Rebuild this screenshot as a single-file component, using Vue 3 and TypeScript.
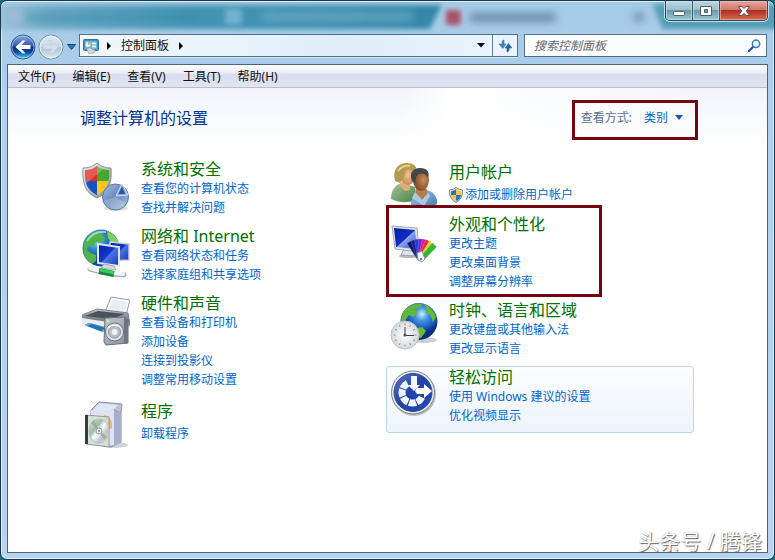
<script setup lang="ts">
import { ref } from 'vue'

interface Category {
  id: string
  title: string
  links: string[]
  shield?: boolean
  marked?: boolean
  active?: boolean
}

const menus: string[] = ['文件(F)', '编辑(E)', '查看(V)', '工具(T)', '帮助(H)']
const query = ref('')
const view = ref('类别')

const columns: Category[][] = [
  [
    { id: 'security', title: '系统和安全', links: ['查看您的计算机状态', '查找并解决问题'] },
    { id: 'network', title: '网络和 Internet', links: ['查看网络状态和任务', '选择家庭组和共享选项'] },
    { id: 'hardware', title: '硬件和声音', links: ['查看设备和打印机', '添加设备', '连接到投影仪', '调整常用移动设置'] },
    { id: 'programs', title: '程序', links: ['卸载程序'] },
  ],
  [
    { id: 'users', title: '用户帐户', links: ['添加或删除用户帐户'], shield: true },
    { id: 'appearance', title: '外观和个性化', links: ['更改主题', '更改桌面背景', '调整屏幕分辨率'], marked: true },
    { id: 'clock', title: '时钟、语言和区域', links: ['更改键盘或其他输入法', '更改显示语言'] },
    { id: 'access', title: '轻松访问', links: ['使用 Windows 建议的设置', '优化视频显示'], active: true },
  ],
]

const fan = [
  { angle: -30, color: '#10106e' },
  { angle: -18, color: '#141f8e' },
  { angle: -7, color: '#1740d8' },
  { angle: 4, color: '#7a22c8' },
  { angle: 14, color: '#d51ba8' },
  { angle: 24, color: '#ee2430' },
  { angle: 34, color: '#e8d42a' },
  { angle: 44, color: '#35b535' },
]
const ticks = Array.from({ length: 12 }, (_, i) => i * 30)
</script>

<template>
  <div class="window">
    <svg class="glass" viewBox="0 0 775 64" preserveAspectRatio="none" aria-hidden="true">
      <defs>
        <linearGradient id="teal" x1="0" x2="1">
          <stop offset="0" stop-color="#9fc6da" />
          <stop offset=".12" stop-color="#6fabc5" />
          <stop offset=".42" stop-color="#4596b5" />
          <stop offset="1" stop-color="#3487a6" />
        </linearGradient>
        <filter id="soft" x="-10%" y="-40%" width="120%" height="180%"><feGaussianBlur stdDeviation="2.5" /></filter>
        <filter id="softer" x="-10%" y="-100%" width="120%" height="300%"><feGaussianBlur stdDeviation="4" /></filter>
      </defs>
      <g filter="url(#soft)">
        <path d="M-8 3H442L430 27H-8Z" fill="url(#teal)" />
        <path d="M653 2H790V27H663Z" fill="#559fb6" />
        <rect x="225" y="7" width="16" height="15" fill="#73b3d0" />
        <rect x="446" y="8" width="15" height="15" rx="2" fill="#a75369" />
        <rect x="9" y="8" width="11" height="14" fill="#9fb9d6" />
      </g>
      <g filter="url(#softer)">
        <rect x="26" y="12" width="175" height="7" fill="#3987aa" opacity=".6" />
        <rect x="262" y="10" width="150" height="9" fill="#79b5cf" opacity=".6" />
        <rect x="470" y="11" width="86" height="9" fill="#52718d" opacity=".7" />
        <rect x="635" y="11" width="9" height="8" fill="#66829c" />
      </g>
    </svg>

    <header class="titlebar">
      <div class="controls">
        <button type="button" class="control" aria-label="最小化">
          <svg width="14" height="12" viewBox="0 0 14 12"><rect x="1.5" y="6.5" width="11" height="4" rx="1" fill="#fff" stroke="#535f6e" /></svg>
        </button>
        <button type="button" class="control" aria-label="最大化">
          <svg width="14" height="12" viewBox="0 0 14 12"><path d="M1.500 1.500H12.500V10.500H1.500ZM5.500 4.500V7.500H8.500V4.500Z" fill="#fff" fill-rule="evenodd" stroke="#535f6e" /></svg>
        </button>
        <button type="button" class="control close" aria-label="关闭">
          <svg width="14" height="12" viewBox="0 0 14 12"><path d="M1.500 1.500H5L7 3.600L9 1.500H12.500L9.300 6L12.500 10.500H9L7 8.400L5 10.500H1.500L4.700 6Z" fill="#fff" stroke="#6b4a50" /></svg>
        </button>
      </div>
    </header>

    <nav class="navigation" aria-label="导航">
      <div class="travel">
        <button type="button" class="plain" aria-label="后退">
          <svg width="26" height="26" viewBox="0 0 26 26">
            <defs>
              <linearGradient id="back" x2="0" y2="1">
                <stop offset="0" stop-color="#8ba8e0" /><stop offset=".46" stop-color="#3159b2" />
                <stop offset=".5" stop-color="#0b2a84" /><stop offset=".72" stop-color="#0e4ba6" /><stop offset="1" stop-color="#4ee4fa" />
              </linearGradient>
            </defs>
            <circle cx="13" cy="13" r="12" fill="url(#back)" stroke="#3c5784" />
            <circle cx="13" cy="13" r="11" fill="none" stroke="#c3d9f3" stroke-opacity=".6" />
            <path d="M5.500 13L12.500 6.500H15.500L11.500 11H20.500V15H11.500L15.500 19.500H12.500Z" fill="#fff" />
          </svg>
        </button>
        <button type="button" class="plain" aria-label="前进">
          <svg width="26" height="26" viewBox="0 0 26 26">
            <defs>
              <linearGradient id="forward" x2="0" y2="1">
                <stop offset="0" stop-color="#e0ebf5" /><stop offset=".48" stop-color="#c8d9e7" />
                <stop offset=".52" stop-color="#adc3d6" /><stop offset="1" stop-color="#dceaf4" />
              </linearGradient>
            </defs>
            <circle cx="13" cy="13" r="12" fill="url(#forward)" stroke="#718ba4" />
            <circle cx="13" cy="13" r="11" fill="none" stroke="#eef5fb" />
            <path d="M20.500 13L13.500 6.500H10.500L14.500 11H5.500V15H14.500L10.500 19.500H13.500Z" fill="#d3e0eb" stroke="#c0d0de" stroke-width=".7" />
          </svg>
        </button>
        <button type="button" class="plain recent" aria-label="最近的页面">
          <svg width="9" height="6" viewBox="0 0 9 6"><path d="M.5 .5H8.500L4.500 5.500Z" fill="#2d78b8" stroke="#17456d" /></svg>
        </button>
      </div>

      <div class="address">
        <svg class="panel-icon" width="16" height="16" viewBox="0 0 16 16" aria-hidden="true">
          <rect x=".5" y="1.500" width="15" height="11" rx="1" fill="#3f8fd0" stroke="#36709f" />
          <rect x="2" y="3" width="12" height="8" fill="#69b7e8" />
          <circle cx="5" cy="6.500" r="2.500" fill="#e8f5e0" /><path d="M5 6.500V4A2.500 2.500 0 0 1 7.500 6.500Z" fill="#e5a630" />
          <path d="M9 5.500H13M9 8.500H13" stroke="#fff" stroke-width="1.500" />
          <path d="M4 12C4 10 7 9 9 11L12 12V14L9 16H6Z" fill="#d8d2c8" stroke="#8d8c8e" stroke-width=".5" />
        </svg>
        <svg class="chevron" width="4" height="8" viewBox="0 0 4 8" aria-hidden="true"><path d="M0 0L4 4L0 8Z" fill="#000" /></svg>
        <button type="button" class="crumb">控制面板</button>
        <svg class="chevron" width="4" height="8" viewBox="0 0 4 8" aria-hidden="true"><path d="M0 0L4 4L0 8Z" fill="#000" /></svg>
        <button type="button" class="plain history" aria-label="以前的位置">
          <svg width="8" height="5" viewBox="0 0 8 5"><path d="M0 0H8L4 4.500Z" fill="#050531" /></svg>
        </button>
        <button type="button" class="plain refresh" aria-label="刷新">
          <svg width="15" height="14" viewBox="0 0 15 14">
            <path d="M6 1C4.500 1 4 2.500 4 4.500V5H1L4.800 9.500L8 5H6Z" fill="#3f8bc4" stroke="#29679e" stroke-width=".5" />
            <path d="M9 13C10.500 13 11.200 11.500 11.200 9.500V9H14L10.500 4.500L7 9H9Z" fill="#2668a5" stroke="#1c4f85" stroke-width=".5" />
          </svg>
        </button>
      </div>

      <form class="search" role="search" @submit.prevent>
        <input v-model="query" type="text" aria-label="搜索控制面板" placeholder="搜索控制面板" />
        <button type="submit" class="plain" aria-label="搜索">
          <svg width="13" height="13" viewBox="0 0 13 13"><path d="M1 12L5.500 7.500" stroke="#284f96" stroke-width="2.200" stroke-linecap="round" /><circle cx="8" cy="4.800" r="3.700" fill="#eff8ff" stroke="#347dc3" stroke-width="1.500" /></svg>
        </button>
      </form>
    </nav>

    <div class="client">
      <div class="menubar">
        <button v-for="menu in menus" :key="menu" type="button">{{ menu }}</button>
      </div>

      <main>
        <div class="heading">
          <h1>调整计算机的设置</h1>
          <div class="view-mode">
            <label for="view">查看方式:</label>
            <span class="picker">
              <select id="view" v-model="view">
                <option>类别</option>
                <option>大图标</option>
                <option>小图标</option>
              </select>
            </span>
          </div>
        </div>

        <div class="categories">
          <div v-for="(column, index) in columns" :key="index" class="column">
            <section
              v-for="item in column"
              :key="item.id"
              class="category"
              :class="{ single: item.links.length === 1, marked: item.marked, active: item.active }"
            >
              <svg v-if="item.id === 'security'" class="icon" viewBox="0 0 48 50" aria-hidden="true">
                <defs>
                  <linearGradient id="rim" x2="1" y2="1"><stop offset="0" stop-color="#f6f6f6" /><stop offset="1" stop-color="#858b8f" /></linearGradient>
                  <clipPath id="shieldClip"><path d="M15 4C11 7 7 8 3 8C2 20 5 28 15 33C25 28 28 20 27 8C23 8 19 7 15 4Z" /></clipPath>
                  <linearGradient id="pie" x2="1" y2="1"><stop offset="0" stop-color="#a9c0df" /><stop offset=".5" stop-color="#6487bc" /><stop offset="1" stop-color="#b5cbe4" /></linearGradient>
                </defs>
                <path d="M15 1C10 5 6 6 1 6C0 21 3 31 15 36C27 31 30 21 29 6C24 6 20 5 15 1Z" fill="url(#rim)" stroke="#888d90" />
                <g clip-path="url(#shieldClip)">
                  <path d="M0 0H15V19H0Z" fill="#d92c23" /><path d="M15 0H31V19H15Z" fill="#46a82b" />
                  <path d="M0 19H15V36H0Z" fill="#1453c2" /><path d="M15 19H31V36H15Z" fill="#ffc51b" />
                  <path d="M0 0H30L0 25Z" fill="#fff" opacity=".22" />
                </g>
                <ellipse cx="34" cy="46" rx="12" ry="3" fill="#7d8999" opacity=".3" />
                <circle cx="33.500" cy="35" r="13" fill="url(#pie)" stroke="#5d7aa5" />
                <path d="M22 39A12 12 0 0 0 44 41L33 35Z" fill="#d4e2f1" opacity=".35" />
                <path d="M34 34L40 22L46 33Z" fill="#7f9fd2" stroke="#d7e4f4" />
                <path d="M36.500 32L40 24.500L43 32Z" fill="#2855aa" />
              </svg>

              <svg v-else-if="item.id === 'network'" class="icon" viewBox="0 0 48 50" aria-hidden="true">
                <defs>
                  <radialGradient id="earth" cx=".35" cy=".28"><stop offset="0" stop-color="#b2ecfb" /><stop offset=".45" stop-color="#3393d2" /><stop offset="1" stop-color="#154b9e" /></radialGradient>
                  <linearGradient id="screen" x2="1" y2="1"><stop offset="0" stop-color="#071ea0" /><stop offset=".48" stop-color="#1238ce" /><stop offset=".52" stop-color="#4b75e7" /><stop offset="1" stop-color="#1933b4" /></linearGradient>
                </defs>
                <circle cx="19" cy="19" r="18.500" fill="url(#earth)" />
                <path d="M3 12C8 3 15 2 21 3L20 7L24 9L19 14L14 13L12 17L7 17L5 21L9 24L14 26L14 32L10 35C2 30-1 20 3 12Z" fill="#50b34b" />
                <path d="M25 2C32 5 36 10 37 15L29 13L26 9Z" fill="#83cf5d" />
                <path d="M5 12Q12 1 24 3" fill="none" stroke="#e9ffff" stroke-width="2" opacity=".55" />
                <path d="M28 13L47 15V31L28 32Z" fill="url(#screen)" stroke="#cbd3db" stroke-width="1.500" />
                <path d="M16 15L37 18V37L16 34Z" fill="url(#screen)" stroke="#e0e6ea" stroke-width="2" />
                <path d="M22 35L32 37L34 41L19 39Z" fill="#d3dae0" stroke="#8c9aa5" stroke-width=".7" />
                <path d="M8 40L19 43M31 45L42 46" stroke="#a7b0b5" stroke-width="5" stroke-linecap="round" />
                <path d="M8 39L18 42M31 44L41 45" stroke="#f1f5f6" stroke-width="4" stroke-linecap="round" />
                <path d="M17 42L32 45" stroke="#16843a" stroke-width="6" /><path d="M18 41L32 44" stroke="#36cf59" stroke-width="3" />
              </svg>

              <svg v-else-if="item.id === 'hardware'" class="icon" viewBox="0 0 48 50" aria-hidden="true">
                <defs>
                  <linearGradient id="printer" x2="0" y2="1"><stop offset="0" stop-color="#bec7cd" /><stop offset=".45" stop-color="#707a82" /><stop offset="1" stop-color="#e6e9eb" /></linearGradient>
                  <linearGradient id="speaker" x2="1" y2="1"><stop offset="0" stop-color="#c3cbd0" /><stop offset="1" stop-color="#858f96" /></linearGradient>
                </defs>
                <path d="M29 1L48 4L43 23L22 19Z" fill="#f8fafc" stroke="#929ba3" />
                <path d="M31 3L45 6L42 18L26 15Z" fill="#e8eef3" />
                <path d="M0 19L15 13L46 17L48 29L31 37L0 29Z" fill="url(#printer)" stroke="#798188" />
                <path d="M3 20L16 15L43 18L29 23Z" fill="#4a535a" />
                <path d="M0 22L26 26V35L0 30Z" fill="#e9ecef" />
                <path d="M1 29L7 26L26 31L21 37Z" fill="#58a9dd" stroke="#fff" />
                <path d="M5 30L10 28L23 32L19 35Z" fill="#286eae" />
                <path d="M23 22L42 21L46 24V47L24 49L22 46Z" fill="url(#speaker)" stroke="#657078" />
                <path d="M42 21L46 24V47L42 48Z" fill="#6b767d" />
                <circle cx="32.500" cy="36" r="9" fill="#dde2e4" stroke="#68747c" />
                <circle cx="32.500" cy="36" r="6" fill="#b7bfc4" stroke="#8e989e" />
                <circle cx="32.500" cy="36" r="3" fill="#eff2f3" />
                <path d="M26 32Q30 28 36 30" fill="none" stroke="#fff" stroke-width="1.500" />
                <circle cx="26" cy="25" r="1" fill="#dfe4e6" />
              </svg>

              <svg v-else-if="item.id === 'programs'" class="icon" viewBox="0 0 48 50" aria-hidden="true">
                <defs>
                  <linearGradient id="box" x2="1" y2="1"><stop offset="0" stop-color="#edf0fb" /><stop offset="1" stop-color="#b0b8d2" /></linearGradient>
                  <linearGradient id="disc" x2="1" y2="1"><stop offset="0" stop-color="#d8e6df" /><stop offset=".35" stop-color="#9ebba7" /><stop offset=".5" stop-color="#fff" /><stop offset=".7" stop-color="#bdc3cb" /><stop offset="1" stop-color="#dfe9c5" /></linearGradient>
                </defs>
                <ellipse cx="33" cy="44" rx="13" ry="3" fill="#697080" opacity=".3" />
                <path d="M9 9H32L39 12V41L29 46L9 43Z" fill="url(#box)" stroke="#858dac" />
                <path d="M17 1L40 3L39 12L32 9H9Z" fill="#bac1d8" stroke="#8991af" />
                <path d="M17 2L36 4L31 9H11Z" fill="#e3e7f3" />
                <path d="M9 9H32V44L9 43Z" fill="#dfe3f1" />
                <path d="M32 9L39 12V41L32 45Z" fill="#a6aec9" />
                <path d="M22 14Q31 16 30 27L22 31Z" fill="#efb068" />
                <path d="M4 14L27 16V46L4 43Z" fill="#d6ded6" fill-opacity=".9" stroke="#929e98" />
                <path d="M3 14H6V43H3Z" fill="#343b3b" />
                <ellipse cx="17" cy="30" rx="10" ry="12" fill="url(#disc)" stroke="#b6bfbb" />
                <path d="M17 30L9 22L12 19ZM17 30L25 35L22 39Z" fill="#819f88" opacity=".6" />
                <circle cx="17" cy="30" r="3" fill="#edf1ed" stroke="#939c98" /><circle cx="17" cy="30" r="1" fill="#7d8984" />
              </svg>

              <svg v-else-if="item.id === 'users'" class="icon" viewBox="0 0 48 50" aria-hidden="true">
                <defs>
                  <linearGradient id="green" x2="1" y2="1"><stop offset="0" stop-color="#a6c49a" /><stop offset="1" stop-color="#4d824b" /></linearGradient>
                  <linearGradient id="blue" x2="1" y2="1"><stop offset="0" stop-color="#9fc6e6" /><stop offset="1" stop-color="#477cac" /></linearGradient>
                  <radialGradient id="face"><stop offset="0" stop-color="#edc494" /><stop offset="1" stop-color="#ca8c55" /></radialGradient>
                  <radialGradient id="face2" cx=".65"><stop offset="0" stop-color="#c98e5c" /><stop offset="1" stop-color="#85502f" /></radialGradient>
                </defs>
                <path d="M1 37C1 27 6 22 13 21L25 25L25 39Q10 42 1 37Z" fill="url(#green)" />
                <path d="M11 20L20 21L20 28L15 29L9 23Z" fill="#dfad77" />
                <ellipse cx="18" cy="13" rx="8" ry="10" fill="url(#face)" />
                <path d="M5 19C2 8 8 1 17 1C24 1 28 5 26 10C22 8 20 6 16 8L14 16L10 21Z" fill="#b59a51" />
                <path d="M8 9Q12 3 20 4" stroke="#e2d28d" stroke-width="2" fill="none" />
                <path d="M21 44C21 33 27 29 34 28C43 28 48 35 47 42Q36 48 21 44Z" fill="url(#blue)" />
                <path d="M26 25L37 27L38 34L33 38L25 31Z" fill="#ba7b4b" />
                <path d="M25 30L32 38L38 31L40 34L34 44L22 36Z" fill="#a8cbe6" />
                <ellipse cx="31" cy="18" rx="8" ry="11" fill="url(#face2)" />
                <path d="M22 19C19 11 23 6 30 6C37 6 40 10 38 15C35 11 32 11 28 12L26 15L25 21Z" fill="#41474b" />
              </svg>

              <svg v-else-if="item.id === 'appearance'" class="icon" viewBox="0 0 48 50" aria-hidden="true">
                <defs>
                  <linearGradient id="monitor" x2="1" y2="1"><stop offset="0" stop-color="#061f9a" /><stop offset=".5" stop-color="#0e2fc8" /><stop offset=".52" stop-color="#8ea5f5" /><stop offset="1" stop-color="#2142c7" /></linearGradient>
                </defs>
                <ellipse cx="19" cy="39" rx="10" ry="2" fill="#b1babd" />
                <path d="M14 32L24 34L24 39L11 38Z" fill="#e2e6e8" stroke="#95a0a7" />
                <path d="M2 9L27 11L29 35L5 32Z" fill="#dce3e8" stroke="#a0abb2" />
                <path d="M4 11L25 13L27 32L6 30Z" fill="url(#monitor)" />
                <g transform="translate(30 43)">
                  <path
                    v-for="blade in fan"
                    :key="blade.angle"
                    d="M-2 0L-3 -21L3 -21L3 0Z"
                    :fill="blade.color"
                    stroke="#fff"
                    stroke-opacity=".35"
                    stroke-width=".5"
                    :transform="`rotate(${blade.angle})`"
                  />
                </g>
                <path d="M27 36L32 34L35 42L32 45L28 43Z" fill="#f2f3f7" stroke="#8d90a0" /><circle cx="31" cy="42" r="1" fill="#535866" />
              </svg>

              <svg v-else-if="item.id === 'clock'" class="icon" viewBox="0 0 48 50" aria-hidden="true">
                <defs>
                  <radialGradient id="globe" cx=".58" cy=".3"><stop offset="0" stop-color="#c0f1ff" /><stop offset=".36" stop-color="#4593df" /><stop offset=".75" stop-color="#195bc0" /><stop offset="1" stop-color="#092f80" /></radialGradient>
                  <radialGradient id="dial"><stop offset="0" stop-color="#fff" /><stop offset="1" stop-color="#d2d9de" /></radialGradient>
                </defs>
                <ellipse cx="32" cy="37" rx="15" ry="3" fill="#7b8794" opacity=".4" />
                <circle cx="29" cy="18.500" r="18.500" fill="url(#globe)" />
                <path d="M13 9C18 2 26 0 32 1L31 4L25 6L28 10L23 14L19 12L15 18L11 19Q11 13 13 9Z" fill="#5fb83c" />
                <path d="M34 1Q43 5 46 14L43 19L40 11L35 10L37 6Z" fill="#67bb34" />
                <path d="M26 25L32 24L36 28L31 35L27 35L28 30Z" fill="#69bd34" />
                <circle cx="15" cy="32" r="14" fill="url(#dial)" stroke="#b9c2c8" />
                <path v-for="angle in ticks" :key="angle" d="M15 20.500V22.500" stroke="#8e979d" :transform="`rotate(${angle} 15 32)`" />
                <path d="M15 24V32.500H24" fill="none" stroke="#3c4349" /><circle cx="15" cy="32" r="1.500" fill="#464d52" />
              </svg>

              <svg v-else class="icon" viewBox="0 0 48 50" aria-hidden="true">
                <defs>
                  <linearGradient id="access" x2="1" y2="1"><stop offset="0" stop-color="#6078cc" /><stop offset=".45" stop-color="#2342a9" /><stop offset="1" stop-color="#2149b6" /></linearGradient>
                </defs>
                <circle cx="24" cy="24" r="22" fill="#7d8790" opacity=".5" />
                <circle cx="23" cy="22.500" r="21.500" fill="#e7ecf0" stroke="#79838c" />
                <circle cx="23" cy="22.500" r="19" fill="url(#access)" stroke="#3a4b7d" />
                <path d="M17.500 13.300A10.500 10.500 0 1 0 32 27" fill="none" stroke="#f1f4fc" stroke-width="7" stroke-dasharray="7 1" />
                <path d="M21 6H27V15H30L24 21L18 15H21Z" fill="#f4f6fc" />
                <path d="M27 18H34V14L42 21L34 28V24H27L25 21Z" fill="#fff" />
              </svg>

              <div>
                <h2><a href="#">{{ item.title }}</a></h2>
                <ul>
                  <li v-for="link in item.links" :key="link">
                    <svg v-if="item.shield" class="shield" width="14" height="16" viewBox="0 0 14 16" aria-hidden="true">
                      <path d="M7 .5Q4 3 .5 3Q0 12 7 15.500Q14 12 13.500 3Q10 3 7 .5Z" fill="#e8eaeb" stroke="#7b8288" />
                      <path d="M7 2Q5 4 2 4.200V8H7Z" fill="#2874c9" /><path d="M7 2Q9 4 12 4.200V8H7Z" fill="#fac832" />
                      <path d="M2 8H7V14Q2 12 2 8Z" fill="#fac832" /><path d="M12 8H7V14Q12 12 12 8Z" fill="#2874c9" />
                    </svg>
                    <a href="#">{{ link }}</a>
                  </li>
                </ul>
              </div>
            </section>
          </div>
        </div>
      </main>
    </div>
    <div class="watermark">头条号 / 腾锋</div>
  </div>
</template>

<style>
body {
  background: #176d7b;
}
</style>

<style scoped>
*,
*::after {
  box-sizing: border-box;
}

.window {
  position: relative;
  display: flex;
  flex-direction: column;
  min-height: 100vh;
  padding: 0 6px 6px;
  overflow: hidden;
  border: 1px solid #18384e;
  border-radius: 7px;
  background: linear-gradient(#a6cae6, #b0d0ef 120px, #b9d4f0);
  box-shadow: inset 0 0 0 1px #dceefb;
  color: #111;
  font: 12px/19px "Noto Sans", "Noto Sans CJK SC", sans-serif;
}

button,
input,
select {
  margin: 0;
  padding: 0;
  border: 0;
  background: none;
  color: inherit;
  font: inherit;
}

svg {
  display: block;
  flex: none;
}

.glass {
  position: absolute;
  top: 1px;
  left: 0;
  width: 100%;
  height: 64px;
}

.titlebar {
  position: relative;
  display: flex;
  justify-content: flex-end;
  height: 32px;
}

.controls {
  display: flex;
  height: 20px;
  overflow: hidden;
  border: 1px solid #29485b;
  border-top: 0;
  border-radius: 0 0 5px 5px;
  box-shadow: 0 0 0 1px #c0deeb;
}

.control {
  display: grid;
  place-items: center;
  width: 27px;
  border-right: 1px solid #39586b;
  background: linear-gradient(#c1d9e2, #9cbdc9 46%, #6799a9 50%, #9cc8d4);
  box-shadow: inset 0 0 0 1px #d2e4eb99;
}

.control.close {
  width: 47px;
  border: 0;
  background: linear-gradient(#e6a99d, #d1756a 46%, #ae2f20 50%, #d56b50);
  box-shadow: inset 0 0 0 1px #f2c4b999;
}

.navigation {
  position: relative;
  display: flex;
  align-items: flex-start;
  height: 31px;
  padding: 1px 1px 0 3px;
}

.travel {
  display: flex;
  gap: 2px;
  width: 69px;
}

.plain {
  display: grid;
  place-items: center;
}

.recent {
  width: 11px;
}

.address {
  display: flex;
  flex: 434 1 0;
  align-items: center;
  height: 23px;
  padding-left: 3px;
  border: 1px solid #526f86;
  background: linear-gradient(90deg, #f3f8fc, #dfeef9 60%, #eaf4fc);
  box-shadow: 0 1px #d7eafa;
}

.chevron {
  margin: 0 8px;
}

.crumb {
  padding: 0 2px;
}

.history {
  width: 22px;
  height: 21px;
  margin-left: auto;
}

.refresh {
  width: 25px;
  height: 21px;
  border-left: 1px solid #647d91;
}

.search {
  display: flex;
  flex: 227 1 0;
  align-items: center;
  height: 23px;
  margin-left: 6px;
  padding: 0 5px 0 9px;
  border: 1px solid #526f86;
  background: #fafdff;
}

.search input {
  flex: 1;
  min-width: 0;
  outline: 0;
  font-style: italic;
}

.search input::placeholder {
  color: #666;
  opacity: 1;
}

.client {
  position: relative;
  flex: 1;
  border: 1px solid #496579;
  background: #fff;
}

.menubar {
  display: flex;
  gap: 1px;
  height: 23px;
  padding-left: 2px;
  border-bottom: 1px solid #b5bdd0;
  background: linear-gradient(#fdfdff, #eaecf6 38%, #d8ddee 42%, #e1e5f2);
}

.menubar button {
  padding: 0 8px;
}

main {
  padding: 12px 69px 16px 70px;
  background: linear-gradient(100deg, #fff0 48%, #fff 54%, #fff0 85%), linear-gradient(#f1f5fb, #fff 60px);
}

.heading {
  display: flex;
  align-items: center;
  justify-content: space-between;
  padding-left: 2px;
}

h1 {
  margin: 0;
  padding-bottom: 4px;
  color: #003399;
  font-size: 16px;
  font-weight: 400;
  line-height: 24px;
}

.view-mode {
  display: flex;
  gap: 12px;
  height: 40px;
  padding: 5px 12px 0 6px;
  border: 3px solid #740510;
  color: #5c6f8d;
}

.picker {
  position: relative;
  height: 19px;
}

.picker::after {
  position: absolute;
  top: 7px;
  right: 0;
  border: 4px solid transparent;
  border-top: 5px solid #1459b5;
  border-bottom: 0;
  content: "";
  pointer-events: none;
}

select {
  display: block;
  width: 39px;
  height: 19px;
  appearance: none;
  color: #0066cc;
}

.categories {
  display: grid;
  grid-template-columns: repeat(auto-fit, minmax(240px, 308px));
  margin-top: 18px;
}

.category {
  position: relative;
  display: grid;
  grid-template-columns: 48px 1fr;
  gap: 11px;
  padding: 0 0 7px 3px;
  border: 1px solid transparent;
  border-radius: 3px;
}

.category.single {
  min-height: 54px;
  padding-top: 3px;
  padding-bottom: 0;
}

.category.active {
  border-color: #b8d6ee;
  background: linear-gradient(#fbfdff, #edf4fc);
}

.category.marked::after {
  position: absolute;
  inset: -9px auto auto -1px;
  width: 216px;
  height: 92px;
  border: 3px solid #740510;
  content: "";
  pointer-events: none;
}

.icon {
  width: 48px;
  height: 50px;
  margin-top: 3px;
}

.single .icon {
  margin-top: 0;
}

h2 {
  margin: 0;
  font-size: 16px;
  font-weight: 400;
  line-height: 20px;
}

.single h2 {
  margin-bottom: 3px;
}

h2 a {
  color: #007000;
}

a {
  text-decoration: none;
}

ul {
  margin: 0;
  padding: 0;
  list-style: none;
}

li {
  display: flex;
  align-items: center;
  gap: 2px;
  height: 19px;
}

li a {
  color: #0066cc;
}

.watermark {
  position: absolute;
  right: 12px;
  bottom: 4px;
  color: #fff;
  font-size: 21px;
  line-height: 28px;
  text-shadow: 1px 1px 1px #666, 0 0 1px #aaa;
}
</style>
